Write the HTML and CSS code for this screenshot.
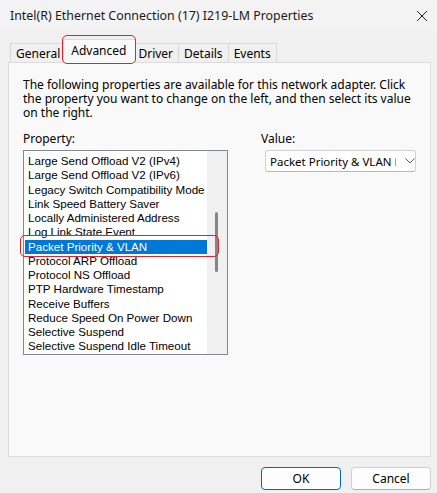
FILE: index.html
```html
<!DOCTYPE html>
<html>
<head>
<meta charset="utf-8">
<link rel="stylesheet" href="styles.css">
</head>
<body>
<div class="dialog">
  <div class="titlebar">
    <span class="title">Intel(R) Ethernet Connection (17) I219-LM Properties</span>
    <svg class="close" width="12" height="12" viewBox="0 0 12 12"><path d="M1 1L11 11M11 1L1 11" stroke="#222" stroke-width="1" fill="none"/></svg>
  </div>
  <div class="tabs">
    <div class="tab">General</div>
    <div class="tab active">Advanced</div>
    <div class="tab">Driver</div>
    <div class="tab">Details</div>
    <div class="tab">Events</div>
    <div class="mark mark-tab"></div>
  </div>
  <div class="panel">
    <p class="desc">The following properties are available for this network adapter. Click the property you want to change on the left, and then select its value on the right.</p>
    <div class="cols">
      <div class="col-left">
        <div class="label">Property:</div>
        <div class="listbox">
          <ul class="items">
            <li>Large Send Offload V2 (IPv4)</li>
            <li>Large Send Offload V2 (IPv6)</li>
            <li>Legacy Switch Compatibility Mode</li>
            <li>Link Speed Battery Saver</li>
            <li>Locally Administered Address</li>
            <li>Log Link State Event</li>
            <li class="sel">Packet Priority &amp; VLAN</li>
            <li>Protocol ARP Offload</li>
            <li>Protocol NS Offload</li>
            <li>PTP Hardware Timestamp</li>
            <li>Receive Buffers</li>
            <li>Reduce Speed On Power Down</li>
            <li>Selective Suspend</li>
            <li>Selective Suspend Idle Timeout</li>
          </ul>
          <div class="scrollbar"><div class="thumb"></div></div>
          <div class="mark mark-item"></div>
        </div>
      </div>
      <div class="col-right">
        <div class="label">Value:</div>
        <div class="select">
          <span class="select-text">Packet Priority &amp; VLAN Enabled</span>
          <svg class="chev" width="10" height="6" viewBox="0 0 10 6"><path d="M0.5 0.5L5 5L9.5 0.5" stroke="#555" stroke-width="1" fill="none"/></svg>
        </div>
      </div>
    </div>
  </div>
  <div class="footer">
    <button class="btn default">OK</button>
    <button class="btn">Cancel</button>
  </div>
</div>
</body>
</html>
```
FILE: styles.css
```css
html, body {
  margin: 0;
  padding: 0;
}
body {
  background: #f0f0f0;
  font-family: "Noto Sans", "Open Sans", sans-serif;
  font-size: 12px;
  color: #000;
}
.dialog {
  width: 437px;
  height: 493px;
  display: flex;
  flex-direction: column;
  position: relative;
}
.titlebar {
  height: 31px;
  display: flex;
  align-items: center;
  justify-content: space-between;
  padding: 0 9px 0 10px;
  background: #f3f3f3;
}
.title {
  font-size: 12.4px;
  color: #1a1a1a;
}
.tabs {
  display: flex;
  align-items: flex-end;
  height: 31px;
  padding-left: 10px;
  position: relative;
  z-index: 1;
}
.tab {
  height: 18px;
  line-height: 19px;
  padding: 0 5px;
  border: 1px solid #d9d9d9;
  border-bottom: none;
  margin-right: -1px;
  background: #f0f0f0;
  color: #000;
}
.tab.active {
  height: 23px;
  line-height: 21px;
  background: #f9f9f9;
  padding: 0 9px 0 7px;
  margin: 0 0 -1px -2px;
  z-index: 2;
  position: relative;
}
.tab.active + .tab {
  margin-left: -1px;
  padding-left: 2px;
}
.mark {
  position: absolute;
  border: 1.5px solid #e0232e;
  border-radius: 5px;
  pointer-events: none;
  z-index: 5;
}
.mark-tab {
  left: 62px;
  top: 4px;
  width: 72px;
  height: 27px;
}
.panel {
  margin: 0 6px 0 8px;
  height: 395px;
  border: 1px solid #dcdcdc;
  background: #f9f9f9;
  padding: 15px 14px 0 14px;
  box-sizing: border-box;
}
.desc {
  margin: 0;
  line-height: 14px;
  width: 390px;
}
.cols {
  display: flex;
  margin-top: 12px;
}
.col-left {
  width: 206px;
}
.col-right {
  margin-left: 33px;
}
.label {
  line-height: 14px;
  height: 14px;
}
.listbox {
  margin-top: 4px;
  height: 205px;
  border: 1px solid #828790;
  background: #fff;
  display: flex;
  position: relative;
  box-sizing: border-box;
}
.items {
  list-style: none;
  margin: 0;
  padding: 3px 0 0 1px;
  flex: 1;
  font-family: "Liberation Sans", Arial, sans-serif;
  font-size: 11.6px;
}
.items li {
  height: 14.25px;
  line-height: 14.25px;
  padding-left: 3px;
  white-space: nowrap;
  color: #000;
}
.items li.sel {
  background: #0078d7;
  color: #fff;
}
.scrollbar {
  width: 20px;
  background: #f0f0f0;
  position: relative;
}
.thumb {
  position: absolute;
  left: 8px;
  top: 61px;
  width: 3px;
  height: 60px;
  border-radius: 2px;
  background: #858585;
}
.mark-item {
  left: -4px;
  top: 84px;
  width: 197px;
  height: 20px;
}
.select {
  margin: 4px 0 0 4px;
  width: 151px;
  height: 22px;
  box-sizing: border-box;
  border: 1px solid #d0d0d0;
  border-bottom-color: #b8b8b8;
  border-radius: 3px;
  background: #fff;
  display: flex;
  align-items: center;
  padding-left: 4px;
  position: relative;
}
.select-text {
  width: 127px;
  overflow: hidden;
  white-space: nowrap;
  font-size: 11.5px;
}
.chev {
  margin-left: 9px;
}
.footer {
  display: flex;
  justify-content: flex-end;
  gap: 10px;
  padding: 10px 6px 0 0;
}
.btn {
  width: 80px;
  height: 23px;
  border: 1px solid #d0d0d0;
  border-bottom-color: #b0b0b0;
  border-radius: 4px;
  background: #fdfdfd;
  font-family: "Noto Sans", "Open Sans", sans-serif;
  font-size: 12px;
  color: #000;
  padding: 0;
}
.btn.default {
  border: 1px solid #0067c0;
}
```
